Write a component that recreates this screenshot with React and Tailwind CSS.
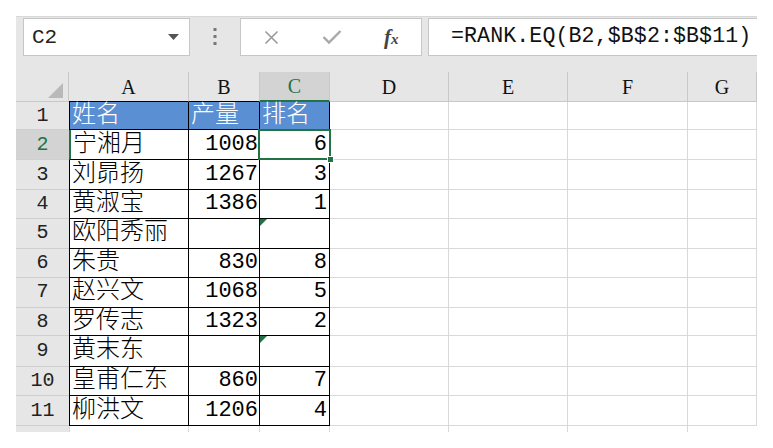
import React from "react";

const cols = [
  { label: "A", w: "w-[120px]" },
  { label: "B", w: "w-[71px]" },
  { label: "C", w: "w-[70px]" },
  { label: "D", w: "w-[119px]" },
  { label: "E", w: "w-[119px]" },
  { label: "F", w: "w-[120px]" },
  { label: "G", w: "w-[69px]" },
];

const heights = [
  "h-[29px]",
  "h-[30px]",
  "h-[30px]",
  "h-[29px]",
  "h-[30px]",
  "h-[29px]",
  "h-[30px]",
  "h-[29px]",
  "h-[31px]",
  "h-[29px]",
  "h-[30px]",
];

const data = [
  ["姓名", "产量", "排名"],
  ["宁湘月", "1008", "6"],
  ["刘昴扬", "1267", "3"],
  ["黄淑宝", "1386", "1"],
  ["欧阳秀丽", "", ""],
  ["朱贵", "830", "8"],
  ["赵兴文", "1068", "5"],
  ["罗传志", "1323", "2"],
  ["黄末东", "", ""],
  ["皇甫仁东", "860", "7"],
  ["柳洪文", "1206", "4"],
];

function GreenTri() {
  return (
    <svg className="absolute left-0 top-0" width="7" height="7" viewBox="0 0 7 7">
      <polygon points="0,0 7,0 0,7" fill="#217346" />
    </svg>
  );
}

function FormulaBar() {
  return (
    <div className="flex h-[55px] items-start pt-[1px]">
      <div className="ml-[7px] flex h-[38px] w-[167px] items-center justify-between border border-[#c6c6c6] bg-white pl-[8px] pr-[10px]">
        <span className="text-[21px] leading-none text-[#222]">C2</span>
        <svg width="11" height="6" viewBox="0 0 11 6">
          <polygon points="0,0 11,0 5.5,6" fill="#555" />
        </svg>
      </div>
      <div className="flex h-[38px] w-[50px] items-center justify-center">
        <svg width="4" height="18" viewBox="0 0 4 18">
          <rect x="0.5" y="0" width="3" height="3" fill="#777" />
          <rect x="0.5" y="7" width="3" height="3" fill="#777" />
          <rect x="0.5" y="14" width="3" height="3" fill="#777" />
        </svg>
      </div>
      <div className="flex h-[38px] w-[182px] items-center border border-[#c6c6c6] bg-white pl-[1px]">
        <div className="flex w-[60px] justify-center">
          <svg width="15" height="15" viewBox="0 0 15 15">
            <path d="M1.5 1.5 L13.5 13.5 M13.5 1.5 L1.5 13.5" stroke="#9a9a9a" strokeWidth="1.6" fill="none" />
          </svg>
        </div>
        <div className="flex w-[60px] justify-center">
          <svg width="20" height="16" viewBox="0 0 20 16">
            <path d="M1.5 8 L7 13.5 L18.5 2" stroke="#a8a8a8" strokeWidth="2.4" fill="none" />
          </svg>
        </div>
        <div className="flex w-[60px] justify-center">
          <span className="font-['Liberation_Serif',serif] text-[21px] font-bold italic leading-none text-[#444]">
            f<span className="text-[15px]">x</span>
          </span>
        </div>
      </div>
      <div className="ml-[6px] flex h-[38px] flex-1 items-center border border-r-0 border-[#c6c6c6] bg-white pl-[22px]">
        <span className="whitespace-nowrap text-[21.6px] leading-none tracking-[0.1px] text-[#111]">
          =RANK.EQ(B2,$B$2:$B$11)
        </span>
      </div>
    </div>
  );
}

function HeaderRow() {
  return (
    <div className="flex h-[30px]">
      <div className="relative w-[53px] border-r border-b border-[#c8c8c8] bg-[#e6e6e6]">
        <svg className="absolute right-[5px] bottom-[3px]" width="15" height="15" viewBox="0 0 15 15">
          <polygon points="15,0 15,15 0,15" fill="#b9b9b9" />
        </svg>
      </div>
      {cols.map((c, i) => {
        const sel = i === 2;
        const dark = i < 2;
        return (
          <div
            key={c.label}
            className={
              c.w +
              " flex items-end justify-center border-r border-[#c8c8c8] pb-[4px] font-['Liberation_Serif',serif] text-[20px] leading-none " +
              (sel
                ? "border-b-2 border-b-[#217346] bg-[#d3d3d3] text-[#217346]"
                : dark
                ? "border-b border-b-black bg-[#e6e6e6] text-[#111]"
                : "border-b border-b-[#c8c8c8] bg-[#e6e6e6] text-[#111]")
            }
          >
            {c.label}
          </div>
        );
      })}
    </div>
  );
}

function DataRow({ r, idx }) {
  const isHead = idx === 0;
  const sel = idx === 1;
  const [a, b, c] = r;
  const tri = idx === 4 || idx === 8;
  const textCls = isHead ? "text-white" : "text-black";
  const bg = isHead ? "bg-[#5b8fd3]" : "bg-white";
  return (
    <div className={"flex " + heights[idx]}>
      <div
        className={
          "flex w-[53px] items-center justify-center border-b border-[#cfcfcf] text-[20px] leading-none " +
          (sel ? "bg-[#d3d3d3] text-[#217346]" : "bg-[#e6e6e6] text-[#222]")
        }
      >
        {idx + 1}
      </div>
      <div
        className={
          "flex w-[120px] items-center border-r border-b border-black pl-[2px] text-[24px] font-light leading-none " +
          (sel ? "border-l-2 border-l-[#217346] " : "border-l ") +
          bg +
          " " +
          textCls
        }
      >
        {a}
      </div>
      <div
        className={
          "flex w-[71px] items-center border-r border-b border-black pr-[1px] text-[22px] leading-none " +
          (isHead ? "justify-start pl-[2px] text-[24px] font-light " : "justify-end ") +
          bg +
          " " +
          textCls
        }
      >
        {b}
      </div>
      <div
        className={
          "relative flex w-[70px] items-center border-r border-b border-black pr-[2px] text-[22px] leading-none " +
          (isHead ? "justify-start pl-[2px] text-[24px] font-light " : "justify-end ") +
          bg +
          " " +
          textCls
        }
      >
        {tri && <GreenTri />}
        {c}
        {sel && (
          <>
            <div className="pointer-events-none absolute -left-[2px] -top-[1px] -right-[2px] -bottom-[1px] z-10 border-2 border-[#217346]" />
            <div className="absolute -right-[5px] -bottom-[4px] z-20 h-[7px] w-[7px] border border-white bg-[#217346]" />
          </>
        )}
      </div>
      {cols.slice(3).map((col) => (
        <div key={col.label} className={col.w + " border-r border-b border-[#d9d9d9] bg-white"} />
      ))}
    </div>
  );
}

export default function App() {
  return (
    <div className="h-[448px] w-[773px] overflow-hidden bg-white pl-[16px] pt-[16px] font-['Liberation_Mono','Noto_Sans_CJK_SC',monospace]">
      <div className="flex h-[416px] w-[741px] flex-col overflow-hidden border-t border-[#d8d8d8] bg-[#e6e6e6]">
        <FormulaBar />
        <HeaderRow />
        {data.map((r, i) => (
          <DataRow key={i} r={r} idx={i} />
        ))}
        <div className="flex h-[6px]">
          <div className="w-[53px] bg-[#e6e6e6]" />
          <div className="w-[120px] border-r border-l border-[#d9d9d9] bg-white" />
          <div className="w-[71px] border-r border-[#d9d9d9] bg-white" />
          <div className="w-[70px] border-r border-[#d9d9d9] bg-white" />
          <div className="w-[119px] border-r border-[#d9d9d9] bg-white" />
          <div className="w-[119px] border-r border-[#d9d9d9] bg-white" />
          <div className="w-[120px] border-r border-[#d9d9d9] bg-white" />
          <div className="w-[69px] bg-white" />
        </div>
      </div>
    </div>
  );
}
